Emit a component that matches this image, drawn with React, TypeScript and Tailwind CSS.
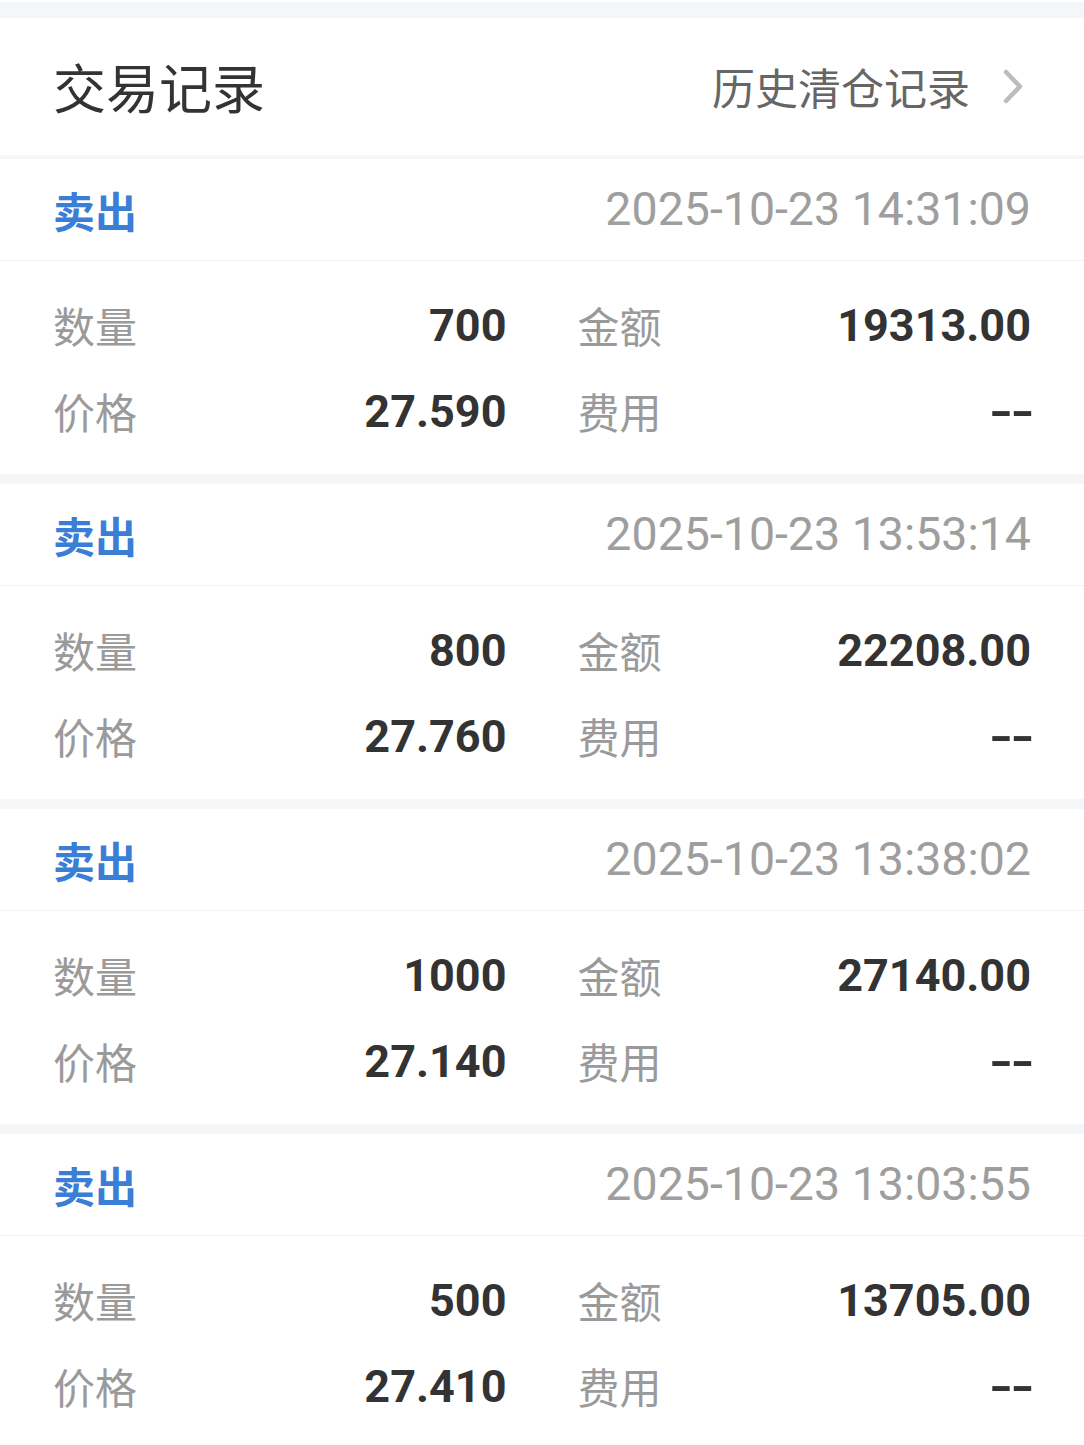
import React from "react";

type Rec = { time: string; qty: string; amount: string; price: string; fee: string };

const records: Rec[] = [
  { time: "2025-10-23 14:31:09", qty: "700", amount: "19313.00", price: "27.590", fee: "--" },
  { time: "2025-10-23 13:53:14", qty: "800", amount: "22208.00", price: "27.760", fee: "--" },
  { time: "2025-10-23 13:38:02", qty: "1000", amount: "27140.00", price: "27.140", fee: "--" },
  { time: "2025-10-23 13:03:55", qty: "500", amount: "13705.00", price: "27.410", fee: "--" },
];

const cjk = "font-['Noto_Sans_CJK_SC','Noto_Sans',sans-serif]";
const num = "font-['Roboto','Noto_Sans_CJK_SC',sans-serif]";

function Cell({ label, value }: { label: string; value: string }) {
  const isDash = value === "--";
  return (
    <div className="flex h-[86px] items-center justify-between">
      <span className={`${cjk} text-[42px] leading-none text-[#9a9a9a]`}>{label}</span>
      {isDash ? (
        <span
          className={`${num} origin-right scale-x-[1.4] text-[45px] font-bold leading-none tracking-[-2.5px] text-[#333333]`}
        >
          {value}
        </span>
      ) : (
        <span className={`${num} text-[45px] font-bold leading-none text-[#333333]`}>{value}</span>
      )}
    </div>
  );
}

function Card({ r }: { r: Rec }) {
  return (
    <div className="bg-white">
      <div className="flex h-[102px] items-center justify-between border-b border-[#f1f2f4] px-[53px]">
        <span className={`${cjk} text-[42px] font-bold leading-none text-[#3a7ed6]`}>卖出</span>
        <span className={`${num} text-[46.5px] leading-none text-[#9e9e9e]`}>{r.time}</span>
      </div>
      <div className="grid grid-cols-2 gap-x-[71px] px-[53px] pt-[21px] pb-[20px]">
        <Cell label="数量" value={r.qty} />
        <Cell label="金额" value={r.amount} />
        <Cell label="价格" value={r.price} />
        <Cell label="费用" value={r.fee} />
      </div>
    </div>
  );
}

export default function App() {
  return (
    <div className="min-h-[1445px] w-[1084px] bg-[#f5f6f8]">
      <div className="h-[2px] bg-white" />
      <div className="h-[16px]" />
      <div className="flex h-[137px] items-center justify-between bg-white pl-[53px] pr-[61px]">
        <span className={`${cjk} text-[53px] leading-none text-[#333333]`}>交易记录</span>
        <div className="flex items-center gap-[33px]">
          <span className={`${cjk} text-[43px] leading-none text-[#666666]`}>历史清仓记录</span>
          <svg width="20" height="35" viewBox="0 0 20 35" fill="none">
            <polyline
              points="3,3 17,17.5 3,32"
              stroke="#bcbcbc"
              strokeWidth="4.5"
              strokeLinecap="round"
              strokeLinejoin="round"
            />
          </svg>
        </div>
      </div>
      <div className="mt-[4px] flex flex-col gap-[10px]">
        {records.map((r, i) => (
          <Card key={i} r={r} />
        ))}
      </div>
    </div>
  );
}
